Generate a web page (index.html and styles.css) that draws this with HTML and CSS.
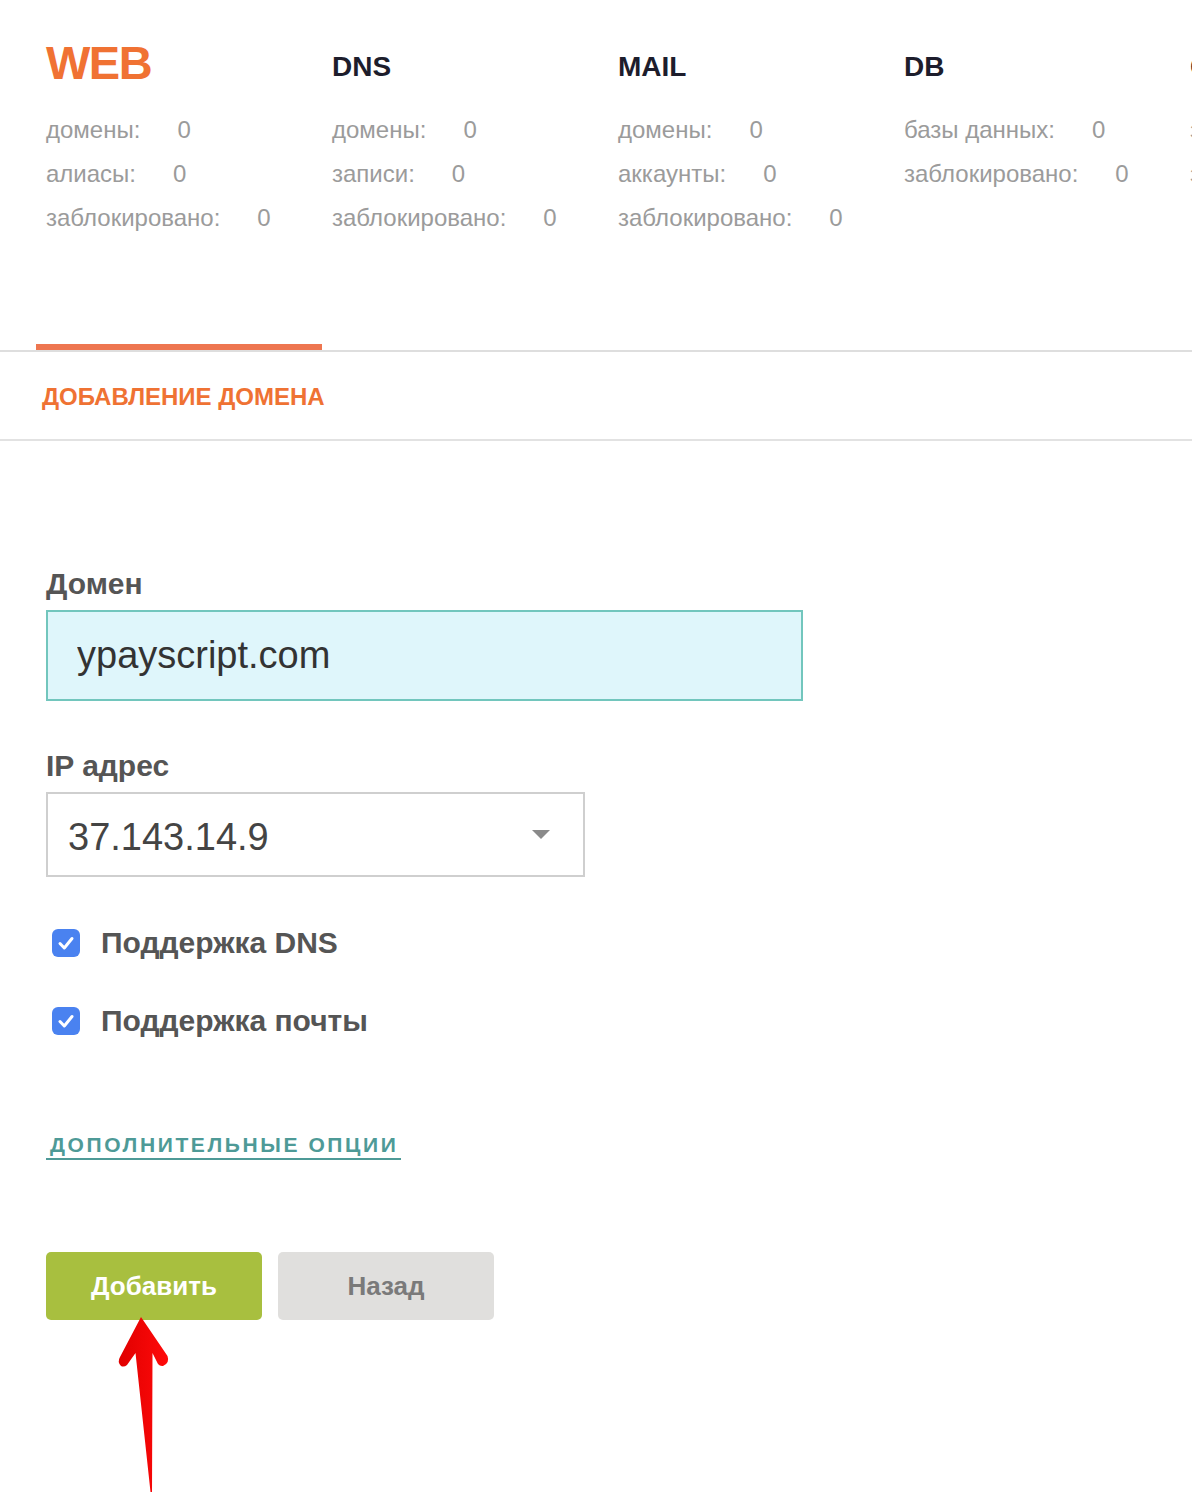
FILE: index.html
```html
<!DOCTYPE html>
<html lang="ru">
<head>
<meta charset="utf-8">
<title>Добавление домена</title>
<link rel="stylesheet" href="styles.css">
</head>
<body>
<div class="page">
  <div class="stats">
    <div class="col-title web">WEB</div>
    <div class="col-title">DNS</div>
    <div class="col-title">MAIL</div>
    <div class="col-title">DB</div>
    <div class="col-title">CRON</div>

    <ul class="stat-list">
      <li>домены:<span class="val">0</span></li>
      <li>алиасы:<span class="val">0</span></li>
      <li>заблокировано:<span class="val">0</span></li>
    </ul>
    <ul class="stat-list">
      <li>домены:<span class="val">0</span></li>
      <li>записи:<span class="val">0</span></li>
      <li>заблокировано:<span class="val">0</span></li>
    </ul>
    <ul class="stat-list">
      <li>домены:<span class="val">0</span></li>
      <li>аккаунты:<span class="val">0</span></li>
      <li>заблокировано:<span class="val">0</span></li>
    </ul>
    <ul class="stat-list">
      <li>базы данных:<span class="val">0</span></li>
      <li>заблокировано:<span class="val">0</span></li>
    </ul>
    <ul class="stat-list">
      <li>задания:<span class="val">0</span></li>
      <li>заблокировано:<span class="val">0</span></li>
    </ul>
  </div>

  <div class="tabs">
    <div class="tab-active"></div>
  </div>

  <div class="section-head">
    <h1 class="section-title">ДОБАВЛЕНИЕ ДОМЕНА</h1>
  </div>

  <form class="form">
    <label class="field-label" for="domain">Домен</label>
    <input class="text-input" id="domain" type="text" value="ypayscript.com">

    <label class="field-label ip-label" for="ip">IP адрес</label>
    <div class="select" id="ip">
      <span class="select-value">37.143.14.9</span>
      <span class="select-arrow"></span>
    </div>

    <div class="check-row first">
      <span class="checkbox"><svg viewBox="0 0 28 28" width="28" height="28"><path d="M8 14.5 L12.3 19 L20 9.5" fill="none" stroke="#fff" stroke-width="3" stroke-linecap="round" stroke-linejoin="round"/></svg></span>
      <span class="check-label">Поддержка DNS</span>
    </div>
    <div class="check-row second">
      <span class="checkbox"><svg viewBox="0 0 28 28" width="28" height="28"><path d="M8 14.5 L12.3 19 L20 9.5" fill="none" stroke="#fff" stroke-width="3" stroke-linecap="round" stroke-linejoin="round"/></svg></span>
      <span class="check-label">Поддержка почты</span>
    </div>

    <div class="more-row"><a class="more-link" href="#">ДОПОЛНИТЕЛЬНЫЕ ОПЦИИ</a></div>

    <div class="buttons">
      <button type="button" class="btn btn-add">Добавить</button>
      <button type="button" class="btn btn-back">Назад</button>
    </div>
  </form>

  <svg class="arrow" width="60" height="190" viewBox="110 1310 60 190">
    <defs>
      <linearGradient id="ag" x1="0" x2="1" y1="0" y2="0">
        <stop offset="0" stop-color="#e00000"/>
        <stop offset="1" stop-color="#ff0a0a"/>
      </linearGradient>
    </defs>
    <path d="M141 1317 L167.5 1356 Q170 1363 163 1366 Q160 1366.5 158 1364 L152.5 1353 L152 1492 L150.5 1492 L135.5 1353 L127 1365 Q124 1367.5 121 1366 Q117 1362 120 1357 Z" fill="url(#ag)"/>
  </svg>
</div>
</body>
</html>
```

FILE: styles.css
```css
html, body {
  margin: 0;
  padding: 0;
  background: #ffffff;
}

body {
  font-family: "Liberation Sans", Arial, Helvetica, sans-serif;
  overflow-x: hidden;
}

.page {
  position: relative;
  width: 1192px;
  min-height: 1497px;
  overflow: hidden;
}

/* ---------- stats ---------- */
.stats {
  display: grid;
  grid-template-columns: repeat(5, 286px);
  padding: 39px 0 0 46px;
  width: max-content;
}

.col-title {
  align-self: start;
  margin-top: 14px;
  font-size: 28px;
  line-height: 28px;
  font-weight: bold;
  color: #1d1d2c;
}

.col-title.web {
  margin-top: 0;
  font-size: 47px;
  line-height: 48px;
  letter-spacing: -1.5px;
  color: #f07233;
}

.stat-list {
  list-style: none;
  margin: 21px 0 0 0;
  padding: 0;
  font-size: 24px;
  line-height: 44px;
  color: #9b9b9b;
  white-space: nowrap;
}

.val {
  margin-left: 37px;
}

/* ---------- tabs ---------- */
.tabs {
  margin-top: 104px;
  padding-left: 36px;
  border-bottom: 2px solid #dedede;
}

.tab-active {
  width: 286px;
  height: 6px;
  background: #ee7650;
}

.section-head {
  height: 87px;
  display: flex;
  align-items: center;
  padding-left: 42px;
  border-bottom: 2px solid #e2e2e2;
}

.section-title {
  margin: 0;
  font-size: 24px;
  font-weight: bold;
  color: #ef7233;
  padding-top: 2px;
}

/* ---------- form ---------- */
.form {
  padding: 128px 0 0 46px;
  display: flex;
  flex-direction: column;
  align-items: flex-start;
}

.field-label {
  display: block;
  font-size: 30px;
  line-height: 30px;
  font-weight: bold;
  color: #555555;
  margin-bottom: 11px;
}

.ip-label {
  margin-top: 50px;
}

.text-input {
  box-sizing: border-box;
  width: 757px;
  height: 91px;
  margin: 0;
  padding: 0 0 0 29px;
  border: 2px solid #72c6bd;
  background: #dff6fb;
  font-family: "Liberation Sans", Arial, sans-serif;
  font-size: 38px;
  color: #333333;
  outline: none;
}

.select {
  box-sizing: border-box;
  width: 539px;
  height: 85px;
  border: 2px solid #cfcfcf;
  display: flex;
  align-items: center;
  justify-content: space-between;
  padding: 0 33px 0 20px;
}

.select-value {
  font-size: 38px;
  color: #444444;
  padding-top: 6px;
}

.select-arrow {
  width: 0;
  height: 0;
  border-left: 9px solid transparent;
  border-right: 9px solid transparent;
  border-top: 9px solid #8a8a8a;
}

.check-row {
  display: flex;
  align-items: center;
  height: 40px;
  padding-left: 6px;
}

.check-row.first {
  margin-top: 46px;
}

.check-row.second {
  margin-top: 38px;
}

.checkbox {
  width: 28px;
  height: 28px;
  border-radius: 6px;
  background: #4a82f0;
  display: block;
}

.checkbox svg {
  display: block;
}

.check-label {
  margin-left: 21px;
  font-size: 30px;
  font-weight: bold;
  color: #555555;
}

.more-row {
  margin-top: 91px;
}

.more-link {
  display: inline-block;
  padding: 0 3px 0 4px;
  font-size: 21px;
  line-height: 26px;
  font-weight: bold;
  letter-spacing: 2.6px;
  color: #4e9a97;
  text-decoration: none;
  border-bottom: 2px solid #4e9a97;
}

.buttons {
  margin-top: 92px;
  display: flex;
  gap: 16px;
}

.btn {
  width: 216px;
  height: 68px;
  border: none;
  border-radius: 5px;
  font-family: "Liberation Sans", Arial, sans-serif;
  font-size: 26px;
  font-weight: bold;
  cursor: pointer;
}

.btn-add {
  background: #a8bf3f;
  color: #ffffff;
}

.btn-back {
  background: #e0dfdd;
  color: #7a7a7a;
}

/* ---------- annotation arrow ---------- */
.arrow {
  position: absolute;
  left: 110px;
  top: 1310px;
}
```
